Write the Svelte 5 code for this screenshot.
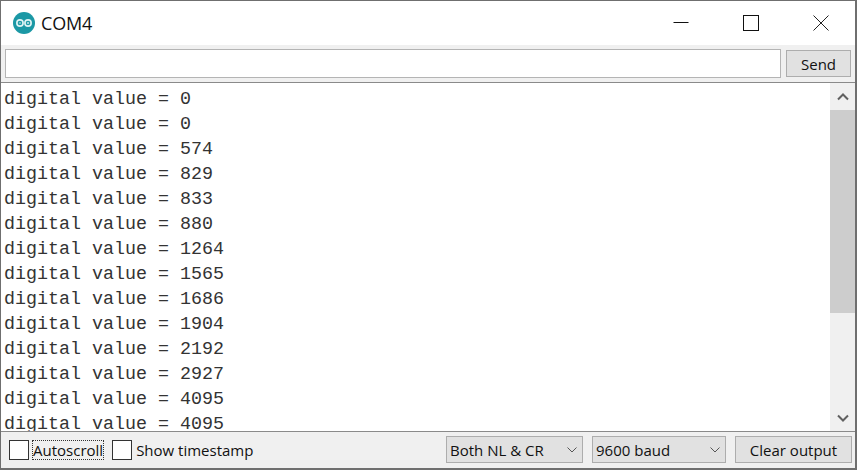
<script lang="ts">
	// Serial monitor window
	const values = [0, 0, 574, 829, 833, 880, 1264, 1565, 1686, 1904, 2192, 2927, 4095, 4095];
</script>

<div class="window">
	<header class="titlebar">
		<svg class="logo" viewBox="0 0 24 24">
			<circle cx="12" cy="12" r="12" fill="#1b98a5" />
			<g fill="none" stroke="#dff3f4" stroke-width="1.8">
				<circle cx="7.6" cy="12" r="3.4" />
				<circle cx="16.4" cy="12" r="3.4" />
			</g>
			<path d="M6.4 12h2.4M15.2 12h2.4M16.4 10.8v2.4" stroke="#dff3f4" stroke-width="0.9" fill="none" />
		</svg>
		<span class="title">COM4</span>
		<div class="controls">
			<svg class="ctl" viewBox="0 0 16 16"><path d="M0.5 7.5h15" stroke="#111" fill="none" /></svg>
			<svg class="ctl" viewBox="0 0 16 16"><rect x="0.5" y="0.5" width="15" height="15" stroke="#111" fill="none" /></svg>
			<svg class="ctl" viewBox="0 0 16 16"><path d="M0.5 0.5l15 15M15.5 0.5l-15 15" stroke="#222" fill="none" /></svg>
		</div>
	</header>

	<div class="send-row">
		<input class="send-input" type="text" aria-label="Message" />
		<button class="btn send">Send</button>
	</div>

	<div class="output">
		<div class="lines">
			{#each values as v}
				<div class="line">digital value = {v}</div>
			{/each}
		</div>
		<div class="scrollbar">
			<div class="arrow">
				<svg viewBox="0 0 12 8"><path d="M1 6.5l5-5 5 5" fill="none" stroke="#606060" stroke-width="2" /></svg>
			</div>
			<div class="thumb"></div>
			<div class="track"></div>
			<div class="arrow">
				<svg viewBox="0 0 12 8"><path d="M1 1.5l5 5 5-5" fill="none" stroke="#606060" stroke-width="2" /></svg>
			</div>
		</div>
	</div>

	<footer class="bottom">
		<label class="check">
			<span class="box"></span>
			<span class="focus">Autoscroll</span>
		</label>
		<label class="check second">
			<span class="box"></span>
			<span>Show timestamp</span>
		</label>
		<div class="spacer"></div>
		<div class="select nl">
			<span>Both NL &amp; CR</span>
			<svg viewBox="0 0 10 6"><path d="M0.5 0.5l4.5 4.5 4.5-4.5" fill="none" stroke="#555" /></svg>
		</div>
		<div class="select baud">
			<span>9600 baud</span>
			<svg viewBox="0 0 10 6"><path d="M0.5 0.5l4.5 4.5 4.5-4.5" fill="none" stroke="#555" /></svg>
		</div>
		<button class="btn clear">Clear output</button>
	</footer>
</div>

<style>
	:global(body) {
		margin: 0;
		background: #f0f0f0;
	}

	.window {
		box-sizing: border-box;
		width: 857px;
		height: 470px;
		display: flex;
		flex-direction: column;
		border: 1px solid #6f6f6f;
		border-right-width: 2px;
		border-bottom-width: 2px;
		background: #f0f0f0;
		font-family: 'Open Sans', 'Liberation Sans', sans-serif;
		font-size: 15px;
		color: #111;
		overflow: hidden;
	}

	.titlebar {
		height: 44px;
		flex-shrink: 0;
		display: flex;
		align-items: center;
		background: #fff;
		padding-left: 12px;
	}

	.logo {
		width: 22px;
		height: 22px;
		margin-right: 6px;
	}

	.title {
		font-size: 18px;
		letter-spacing: -0.2px;
	}

	.controls {
		margin-left: auto;
		display: flex;
		gap: 54px;
		padding-right: 26px;
		padding-bottom: 1px;
	}

	.ctl {
		width: 16px;
		height: 16px;
	}

	.send-row {
		height: 37px;
		flex-shrink: 0;
		display: flex;
		align-items: center;
		gap: 5px;
		padding: 0 4px;
		box-sizing: border-box;
	}

	.send-input {
		box-sizing: border-box;
		width: 776px;
		height: 29px;
		border: 1px solid #b4b4b4;
		background: #fff;
		margin: 0;
		padding: 0 4px;
	}

	.btn {
		box-sizing: border-box;
		height: 27px;
		border: 1px solid #adadad;
		background: #e1e1e1;
		font: inherit;
		color: #111;
		padding: 0;
		margin: 0;
	}

	.send {
		width: 65px;
	}

	.output {
		height: 348px;
		flex-shrink: 0;
		display: flex;
		background: #fff;
		border-top: 1px solid #8a8a8a;
		border-bottom: 1px solid #8a8a8a;
		box-sizing: content-box;
	}

	.lines {
		flex: 1;
		overflow: hidden;
		padding: 4px 0 0 3px;
		font-family: 'Liberation Mono', 'Courier New', monospace;
		font-size: 18.33px;
		color: #333;
	}

	.line {
		height: 25px;
		line-height: 25px;
		white-space: pre;
	}

	.scrollbar {
		width: 25px;
		flex-shrink: 0;
		display: flex;
		flex-direction: column;
		background: #f0f0f0;
	}

	.arrow {
		height: 27px;
		flex-shrink: 0;
		display: flex;
		align-items: center;
		justify-content: center;
	}

	.arrow svg {
		width: 12px;
		height: 8px;
	}

	.thumb {
		height: 203px;
		flex-shrink: 0;
		background: #cdcdcd;
	}

	.track {
		flex: 1;
	}

	.bottom {
		flex: 1;
		min-height: 0;
		display: flex;
		align-items: center;
		padding: 0 3px 1px 8px;
	}

	.check {
		display: flex;
		align-items: center;
		gap: 4px;
	}

	.second {
		margin-left: 9px;
	}

	.box {
		box-sizing: border-box;
		width: 20px;
		height: 20px;
		border: 1px solid #333;
		background: #fff;
	}

	.focus {
		outline: 1px dotted #333;
		line-height: 18px;
	}

	.spacer {
		flex: 1;
	}

	.select {
		box-sizing: border-box;
		height: 27px;
		display: flex;
		align-items: center;
		justify-content: space-between;
		border: 1px solid #adadad;
		background: #e1e1e1;
		padding: 0 5px 0 3px;
		margin-right: 9px;
	}

	.select svg {
		width: 10px;
		height: 6px;
	}

	.nl {
		width: 137px;
	}

	.baud {
		width: 134px;
	}

	.clear {
		width: 117px;
	}
</style>
